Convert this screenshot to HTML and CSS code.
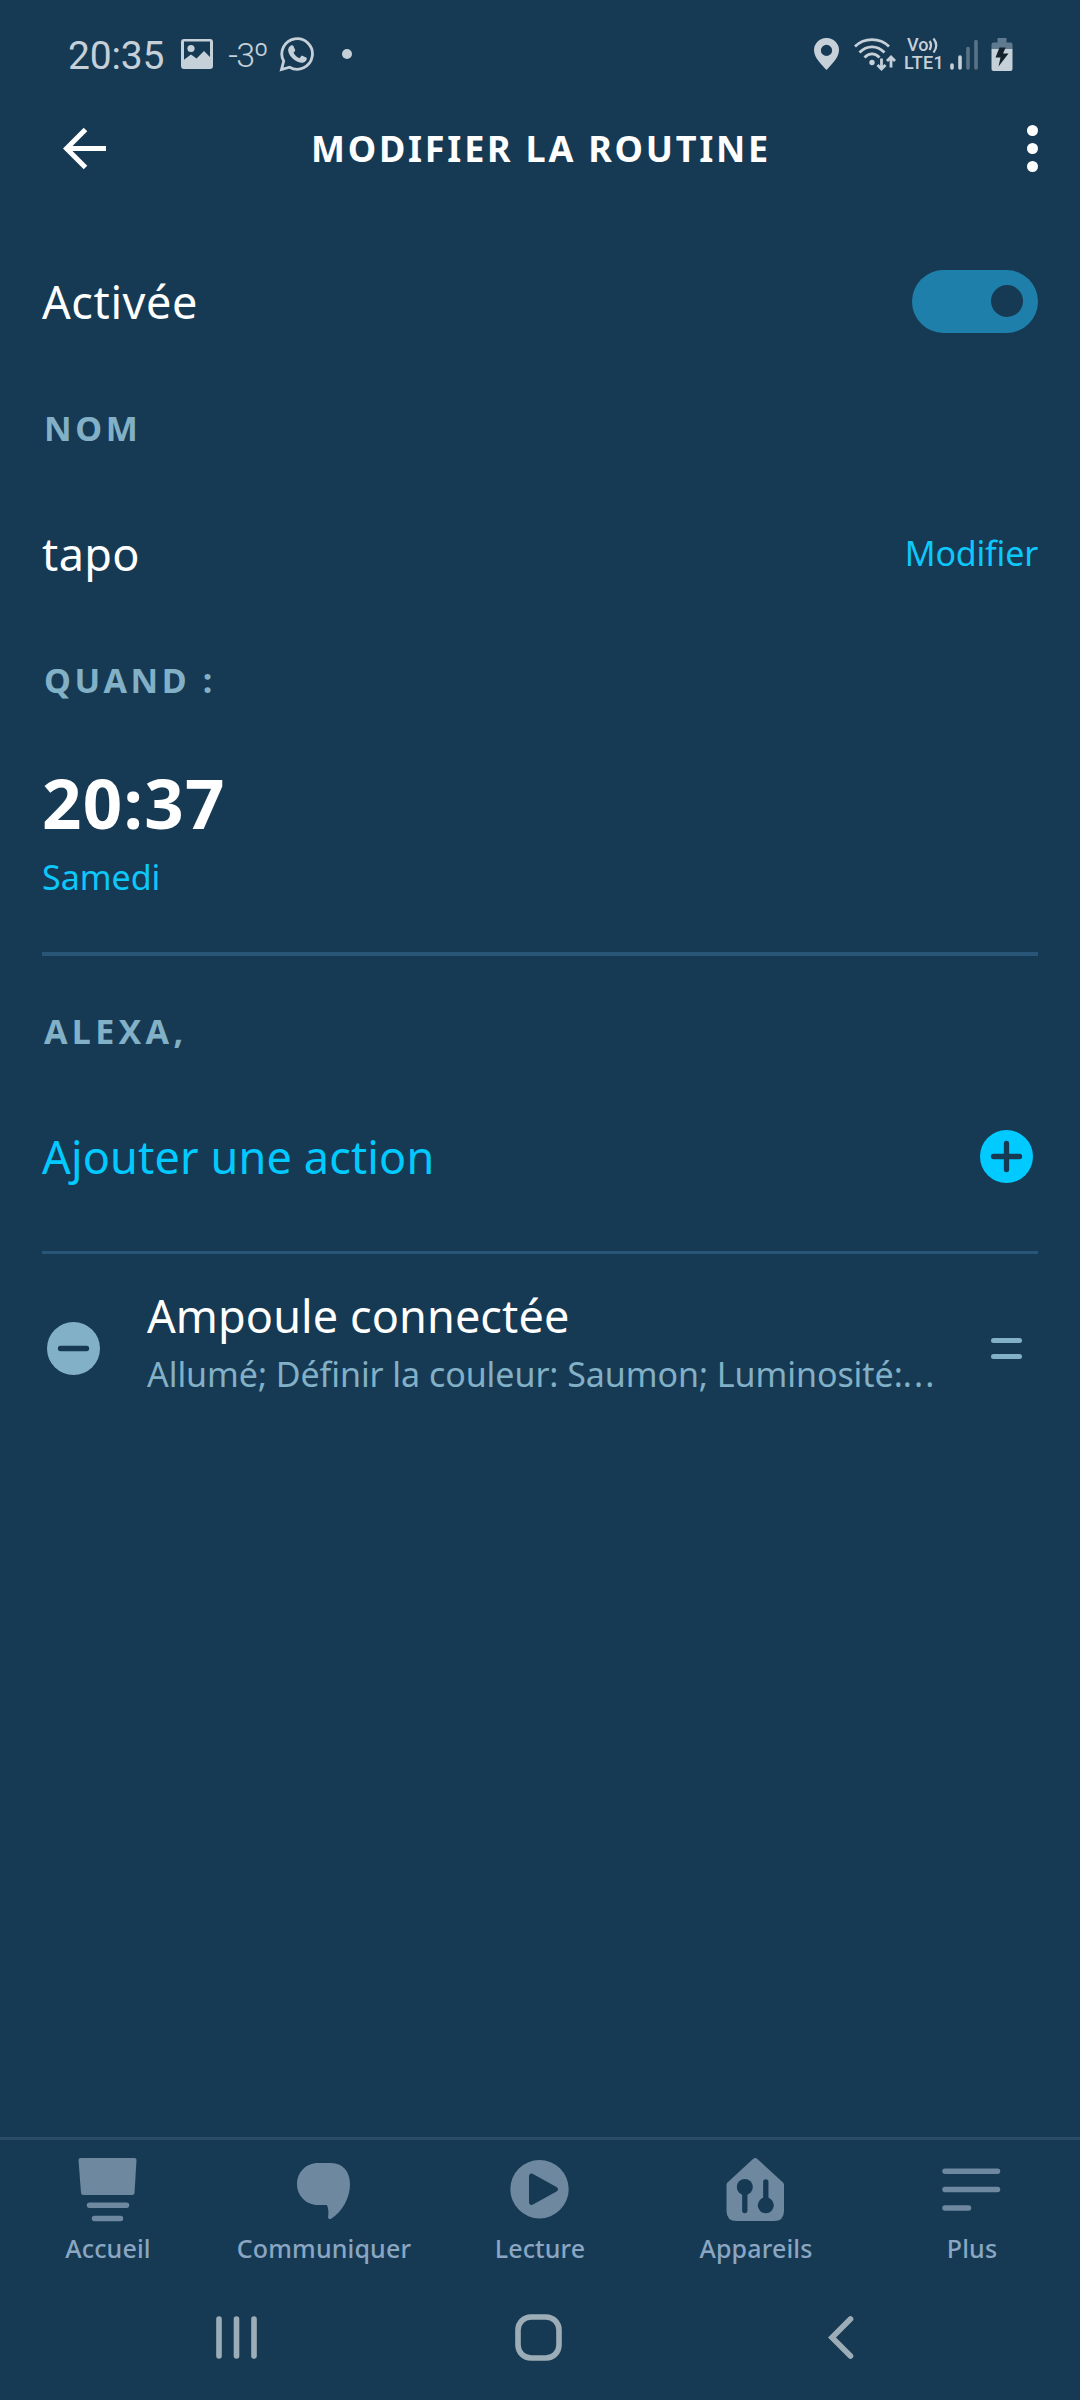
FILE: index.html
```html
<!DOCTYPE html>
<html lang="fr">
<head>
    <meta charset="UTF-8">
    <meta name="viewport" content="width=device-width, initial-scale=1.0">
    <title>Modifier la routine</title>
    <link rel="stylesheet" href="styles.css">
</head>
<body>
    <!-- Status bar -->
    <div class="status-bar">
        <div class="status-left">
            <span class="status-time">20:35</span>
            <svg class="icon-photo" width="32" height="30" viewBox="0 0 32 30">
                <path fill="currentColor" fill-rule="evenodd" d="M3 0h26q3 0 3 3v24q0 3-3 3H3q-3 0-3-3V3q0-3 3-3zM3 2.6v18.200l7-5.300 5.500 4L23 12l6 6V2.600z"/>
                <circle cx="10" cy="9.500" r="3.600" fill="currentColor"/>
            </svg>
            <span class="status-temp">-3º</span>
            <svg class="icon-whatsapp" width="36" height="36" viewBox="0 0 36 36">
                <path fill="none" stroke="currentColor" stroke-width="2.800" d="M2.500 33.500l2.200-8.300A15.300 15.300 0 1 1 10.600 31.200z"/>
                <path fill="currentColor" d="M12 9.500c.9-.5 2-.3 2.400.5l1.700 3.700c.2.600.1 1-.3 1.500l-1.300 1.600c1.300 2.500 3.300 4.300 5.900 5.400l1.700-2c.4-.5.8-.6 1.400-.4l3.600 1.800c.7.400.8.700.6 1.600-.6 2.500-3 3.800-5.300 3.500-6.700-1-12.200-6.300-13.200-11.700-.3-2.300.8-4.400 2.800-5.500z"/>
            </svg>
            <span class="status-dot"></span>
        </div>
        <div class="status-right">
            <svg width="25" height="32" viewBox="0 0 25 32">
                <path fill="currentColor" fill-rule="evenodd" d="M12.500 0A12.300 12.300 0 0 1 25 12.300C25 20 16.500 27.500 12.500 32 8.500 27.500 0 20 0 12.300A12.300 12.300 0 0 1 12.500 0zm0 6.800a5.600 5.600 0 1 0 0 11.200 5.600 5.600 0 0 0 0-11.200z"/>
            </svg>
            <svg class="icon-wifi" width="42" height="33" viewBox="0 0 42 33">
                <g fill="none" stroke="currentColor" stroke-width="2.800">
                    <path d="M1 8.500Q8 1.700 18 1.700T35 8.500"/>
                    <path d="M5.500 14.500Q11 8.800 18 8.800t12.500 5.700"/>
                    <path d="M10.500 19.500Q14 15.900 18 15.900t7.500 3.600"/>
                    <path d="M27.500 20.500V31M23.500 27l4 4 4-4M37 29.500V19M33 23l4-4 4 4"/>
                </g>
                <circle cx="18" cy="24.500" r="2.700" fill="currentColor"/>
            </svg>
            <div class="volte">
                <span class="volte-top">Vo<svg width="11" height="17" viewBox="0 0 11 17"><path fill="none" stroke="currentColor" stroke-width="2.200" d="M1.500 4q3 4 0 9M5.500 1.500q5.500 7 0 14"/></svg></span>
                <span class="volte-bottom">LTE1</span>
            </div>
            <svg class="icon-signal" width="28" height="31" viewBox="0 0 28 31">
                <g stroke="currentColor" stroke-width="3.600" stroke-linecap="round">
                    <path d="M2 26v3M10 18v11"/>
                    <path opacity=".38" d="M18 9.500V29M26 2.500V29"/>
                </g>
            </svg>
            <svg class="icon-battery" width="22" height="33" viewBox="0 0 22 33">
                <path class="battery-empty" d="M6.500 0h9v4.500h4q2 0 2 2V11H.500V6.500q0-2 2-2h4z"/>
                <path fill="currentColor" d="M.500 11h21v20q0 2-2 2h-17q-2 0-2-2z"/>
                <path class="battery-bolt" d="M8.500 9.500h6.200L12 15.500h5.500L7.500 28.500l2-9H4.500z"/>
            </svg>
        </div>
    </div>

    <!-- Header -->
    <div class="header">
        <svg width="43" height="43" viewBox="0 0 43 43">
            <path fill="none" stroke="currentColor" stroke-width="5" d="M22.500 2.500L3.500 21.500l19 19M4 21.500h39"/>
        </svg>
        <h1 class="header-title">MODIFIER LA ROUTINE</h1>
        <div class="menu-dots"><i></i><i></i><i></i></div>
    </div>

    <div class="content">
        <div class="row">
            <span class="row-label state">Activée</span>
            <div class="toggle"><div class="knob"></div></div>
        </div>

        <h2 class="section-title">NOM</h2>
        <div class="row">
            <span class="row-label name">tapo</span>
            <a class="link">Modifier</a>
        </div>

        <h2 class="section-title">QUAND :</h2>
        <div class="schedule">
            <div class="schedule-time">20:37</div>
            <div class="link schedule-day">Samedi</div>
        </div>

        <h2 class="section-title alexa">ALEXA,</h2>
        <div class="row add-action">
            <span class="row-label">Ajouter une action</span>
            <svg width="53" height="53" viewBox="0 0 53 53">
                <circle cx="26.500" cy="26.500" r="26.500" fill="currentColor"/>
                <path class="cut" d="M13.500 26.500h26M26.500 13.500v26"/>
            </svg>
        </div>

        <div class="action">
            <svg width="53" height="53" viewBox="0 0 53 53">
                <circle cx="26.500" cy="26.500" r="26.500" fill="currentColor"/>
                <path class="cut" d="M13.500 26.500h26"/>
            </svg>
            <div class="action-text">
                <div class="action-name">Ampoule connectée</div>
                <div class="action-desc">Allumé; Définir la couleur: Saumon; Luminosité:<span class="ellipsis">...</span></div>
            </div>
            <div class="drag-handle"><i></i><i></i></div>
        </div>
    </div>

    <!-- Tab bar -->
    <div class="tab-bar">
        <div class="tab">
            <svg width="66" height="66" viewBox="0 0 66 66">
                <path fill="currentColor" d="M5.500 2h54q2 0 2 2l-2 33q-.2 2-2.200 2H8.200q-2 0-2.200-2L3.500 4q0-2 2-2z"/>
                <path class="line" d="M14.500 49.300h37M19.500 62.500h26"/>
            </svg>
            <span>Accueil</span>
        </div>
        <div class="tab">
            <svg width="66" height="66" viewBox="0 0 66 66">
                <path fill="currentColor" d="M27 7h13c11.500 0 19 8.500 19 21 0 14-7.500 27-18.500 34.500-1.800 1.200-3.600.3-3.400-1.500.6-4 .4-7.500-.6-10.500-.3-1.100-.8-1.500-2-1.500H27C15 49 6 39.500 6 28S15 7 27 7z"/>
            </svg>
            <span>Communiquer</span>
        </div>
        <div class="tab">
            <svg width="66" height="66" viewBox="0 0 66 66">
                <path fill="currentColor" fill-rule="evenodd" d="M32.500 4a29.200 29.200 0 1 1 0 58.400 29.200 29.200 0 0 1 0-58.400zM22 20.500v25.500c0 2.500 2 3.600 4 2.500l23.500-13c2-1.200 2-3.200 0-4.400L26 18c-2-1.100-4 0-4 2.500z"/>
            </svg>
            <span>Lecture</span>
        </div>
        <div class="tab">
            <svg width="66" height="66" viewBox="0 0 66 66">
                <path fill="currentColor" d="M30 3q2.200-2 4.400 0L60 26.500q1 1 1 2.500v26q0 10-10 10H13.500q-10 0-10-10V29q0-1.500 1-2.500z"/>
                <g class="cut"><path d="M21.800 32v22.500M42.800 26v22"/></g>
                <circle class="cut-fill" cx="21.800" cy="31" r="8"/>
                <circle class="cut-fill" cx="42.800" cy="49.300" r="8"/>
            </svg>
            <span>Appareils</span>
        </div>
        <div class="tab">
            <svg width="66" height="66" viewBox="0 0 66 66">
                <path class="line" d="M6 15.200h52.500M6 33.500h52.500M6 52h23.500"/>
            </svg>
            <span>Plus</span>
        </div>
    </div>

    <!-- System navigation -->
    <div class="nav-bar">
        <svg width="41" height="45" viewBox="0 0 41 45">
            <path d="M3 4v37M20.500 4v37M38 4v37"/>
        </svg>
        <svg width="47" height="47" viewBox="0 0 47 47">
            <rect x="3" y="3" width="41" height="41" rx="13"/>
        </svg>
        <svg class="nav-back" width="26" height="45" viewBox="0 0 26 45">
            <path d="M22.500 4L4 22.500 22.500 41"/>
        </svg>
    </div>
</body>
</html>
```
FILE: styles.css
```css
* {margin: 0; padding: 0; box-sizing: border-box;}
body {
    width: 1080px;
    height: 2400px;
    display: flex;
    flex-direction: column;
    background-color: #173a54;
    color: #fff;
    font-family: "Noto Sans", "Open Sans", sans-serif;
    overflow: hidden;
}
svg {display: block; flex-shrink: 0;}

/* Status bar */
.status-bar {height: 108px; padding: 0 67px 0 68px; display: flex; align-items: center; justify-content: space-between; color: #c5d0d9; font-family: Roboto, sans-serif;}
.status-left, .status-right {display: flex; align-items: center;}
.status-time {font-size: 39px; line-height: 46px; letter-spacing: -0.2px; padding-top: 3px;}
.icon-photo {margin-left: 17px;}
.status-temp {font-size: 34px; font-weight: 300; line-height: 46px; margin-left: 15px; letter-spacing: -1.6px; width: 38px; padding-top: 1px; white-space: nowrap;}
.icon-whatsapp {margin-left: 13px;}
.status-dot {width: 10px; height: 10px; border-radius: 50%; background-color: currentColor; margin-left: 27px;}
.icon-wifi {margin-left: 15px;}
.volte {margin-left: 8px; width: 41px; font-weight: 500;}
.volte-top, .volte-bottom {display: flex; align-items: center; height: 18px; line-height: 18px; font-size: 18px;}
.volte-top {padding-left: 3px;}
.volte-bottom {letter-spacing: 0.3px;}
.icon-signal {margin-left: 5px;}
.icon-battery {margin-left: 13px;}
.battery-empty {fill: #5f7a8e;}
.battery-bolt {fill: #14222c;}

/* Header */
.header {height: 81px; padding: 0 42px 0 63px; display: flex; align-items: center;}
.header-title {flex: 1; margin-left: -51px; text-align: center; font-size: 36px; font-weight: 700; letter-spacing: 2.75px; line-height: 50px; padding-top: 1px;}
.menu-dots {display: flex; flex-direction: column; gap: 7px; width: 11px;}
.menu-dots i {width: 11px; height: 11px; border-radius: 50%; background-color: #fff;}

/* Content */
.content {flex: 1; padding: 49px 42px 0;}
.row {height: 126px; display: flex; align-items: center; justify-content: space-between;}
.row-label {font-size: 45px; line-height: 60px; letter-spacing: 0.15px;}
.row-label.state {letter-spacing: 0.6px; padding-top: 2px;}
.row-label.name {letter-spacing: 0.4px; padding-top: 2px;}
.link {font-size: 34px; color: #0cc8fb; letter-spacing: -0.2px;}
.toggle {width: 126px; height: 63px; border-radius: 32px; background-color: #1f7fab; display: flex; align-items: center; justify-content: flex-end; padding-right: 15px;}
.knob {width: 32px; height: 32px; border-radius: 50%; background-color: #173a54;}
.section-title {height: 126px; line-height: 128px; padding-left: 2px; font-size: 34px; font-weight: 700; letter-spacing: 3.6px; color: #82b0c6;}
.section-title.alexa {margin-top: 12px; line-height: 126px; letter-spacing: 4.3px;}
.schedule {padding: 15px 0 46px; border-bottom: 4px solid #285578;}
.schedule-time {font-size: 69px; font-weight: 700; line-height: 90px; letter-spacing: 1.3px;}
.schedule-day {height: 59px; line-height: 61px; letter-spacing: 0;}
.add-action {color: #00caff; margin-bottom: 31px; padding-right: 5px;}
.add-action svg {margin-bottom: 1px;}
.cut {fill: none; stroke: #173a54; stroke-width: 5.3px; stroke-linecap: round;}
.cut-fill {fill: #173a54;}
.action {height: 192px; border-top: 3px solid #285578; display: flex; align-items: center; padding: 0 16px 0 5px; color: #82b0c6;}
.action-text {flex: 1; margin-left: 47px; padding-bottom: 8px; white-space: nowrap;}
.action-name {font-size: 45px; line-height: 58px; letter-spacing: 0.1px; color: #fff;}
.action-desc {font-size: 34px; line-height: 58px; letter-spacing: -0.06px;}
.ellipsis {letter-spacing: 2.2px;}
.drag-handle {display: flex; flex-direction: column; gap: 11px;}
.drag-handle i {width: 31px; height: 5px; border-radius: 3px; background-color: #82b0c6;}

/* Tab bar */
.tab-bar {height: 138px; border-top: 3px solid #2a4c67; display: flex; padding-top: 16px;}
.tab {flex: 1; display: flex; flex-direction: column; align-items: center; gap: 10px; color: #6d889f;}
.tab span {font-size: 25px; font-weight: 500; line-height: 32px; letter-spacing: 0.15px; color: #8aa6c2;}
.line {fill: none; stroke: currentColor; stroke-width: 5.5px; stroke-linecap: round;}

/* System navigation */
.nav-bar {height: 125px; padding: 0 226px 0 216px; display: flex; align-items: center; justify-content: space-between;}
.nav-bar svg {fill: none; stroke: #9dadb7; stroke-width: 5.6px; stroke-linecap: round;}
.nav-back {margin-left: 9px;}
```
